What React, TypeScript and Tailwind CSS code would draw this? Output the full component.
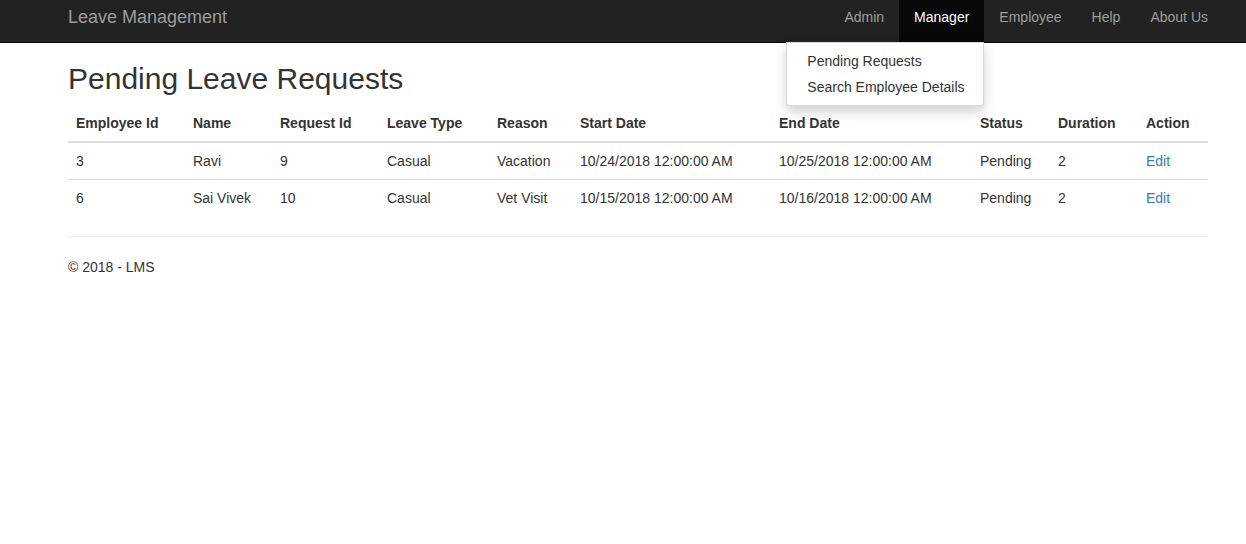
import React from "react";

const cols = "grid grid-cols-[117px_87px_107px_110px_83px_199px_201px_78px_88px_70px]";

const headers = ["Employee Id", "Name", "Request Id", "Leave Type", "Reason", "Start Date", "End Date", "Status", "Duration", "Action"];

const rows = [
  ["3", "Ravi", "9", "Casual", "Vacation", "10/24/2018 12:00:00 AM", "10/25/2018 12:00:00 AM", "Pending", "2"],
  ["6", "Sai Vivek", "10", "Casual", "Vet Visit", "10/15/2018 12:00:00 AM", "10/16/2018 12:00:00 AM", "Pending", "2"],
];

export default function App() {
  return (
    <div className="min-h-[544px] bg-white text-[14px] leading-[20px] text-[#333] font-['Liberation_Sans',Arial,sans-serif]">
      <nav className="h-[43px] bg-[#222] border-b border-[#080808]">
        <div className="ml-[68px] w-[1140px] h-full flex justify-between">
          <a className="pt-[7px] text-[18px] leading-[20px] text-[#9d9d9d]">Leave Management</a>
          <ul className="flex -mr-[15px] h-full">
            <li><a className="block px-[15px] pt-[7px] h-full text-[#9d9d9d]">Admin</a></li>
            <li className="relative">
              <a className="block px-[15px] pt-[7px] h-full bg-[#080808] text-white">Manager</a>
              <div className="absolute right-0 top-[42px] z-10 w-[198px] bg-white border border-[rgba(0,0,0,0.15)] rounded-b-[4px] shadow-[0_6px_12px_rgba(0,0,0,0.175)] py-[5px]">
                <a className="block px-[20px] py-[3px] text-[#333] whitespace-nowrap">Pending Requests</a>
                <a className="block px-[20px] py-[3px] text-[#333] whitespace-nowrap">Search Employee Details</a>
              </div>
            </li>
            <li><a className="block px-[15px] pt-[7px] h-full text-[#9d9d9d]">Employee</a></li>
            <li><a className="block px-[15px] pt-[7px] h-full text-[#9d9d9d]">Help</a></li>
            <li><a className="block px-[15px] pt-[7px] h-full text-[#9d9d9d]">About Us</a></li>
          </ul>
        </div>
      </nav>
      <main className="ml-[68px] w-[1140px]">
        <h2 className="mt-[19px] mb-[10px] text-[30px] leading-[33px] font-medium">Pending Leave Requests</h2>
        <div className="mb-[20px]">
          <div className={`${cols} border-b-2 border-[#ddd] font-bold`}>
            {headers.map((h) => (
              <div key={h} className="p-[8px] whitespace-nowrap">{h}</div>
            ))}
          </div>
          {rows.map((r, i) => (
            <div key={i} className={`${cols} ${i === 0 ? "border-b border-[#ddd]" : ""}`}>
              {r.map((c, j) => (
                <div key={j} className="p-[8px] whitespace-nowrap">{c}</div>
              ))}
              <div className="p-[8px]"><a className="text-[#337ab7]">Edit</a></div>
            </div>
          ))}
        </div>
        <hr className="border-0 border-t border-[#eee] my-[20px]" />
        <footer>
          <p>© 2018 - LMS</p>
        </footer>
      </main>
    </div>
  );
}
